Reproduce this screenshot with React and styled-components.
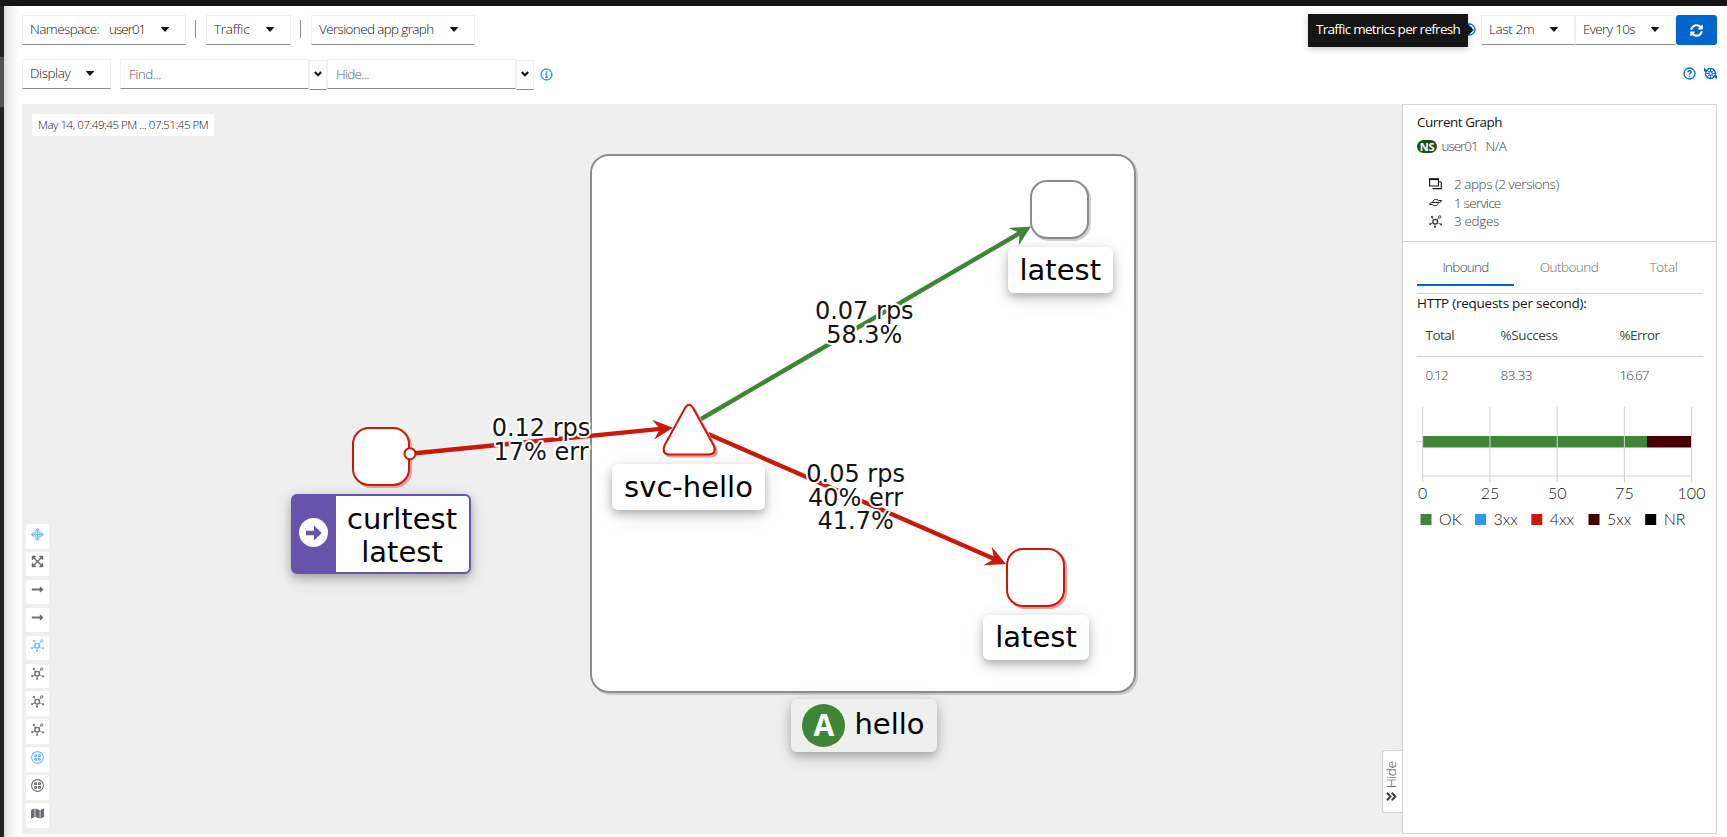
import React from 'react';
import styled, { createGlobalStyle, css } from 'styled-components';
import {
  FaSyncAlt, FaExpandArrowsAlt, FaLongArrowAltRight, FaMap,
} from 'react-icons/fa';

const GREEN = '#3e8635';
const RED = '#c9190b';
const GREY = '#8a8d90';
const BLUE = '#0066cc';

const Global = createGlobalStyle`
  *, *::before, *::after { box-sizing: border-box; }
  html, body { margin: 0; height: 100%; overflow: hidden; }
  body { background: #fff; color: #151515; font: 300 13.5px/20px "Open Sans", sans-serif; }
  svg { display: block; flex: none; }
`;

const T = styled.span`
  letter-spacing: ${p => (p.$ls ?? -0.3) - 0.25}px;
  white-space: nowrap;
`;

/* ---------- shell ---------- */
const Shell = styled.div`
  height: 837px;
  display: grid;
  grid-template: 6px 1fr / 4px 1fr;
`;
const TopBar = styled.div`
  grid-column: 1 / 3;
  background: #151515;
`;
const NavEdge = styled.div`
  background: linear-gradient(#212427 51px, #4f5255 51px, #4f5255 101px, #212427 101px);
`;
const Main = styled.div`
  padding: 9px 10px 3px 18px;
  display: flex;
  flex-direction: column;
  background: linear-gradient(90deg, #dcdcdc 0, #eee 5px, #fafafa 12px, #fff 17px);
  min-width: 0;
`;

/* ---------- toolbar ---------- */
const Row = styled.div`
  display: flex;
  align-items: flex-start;
  height: ${p => p.$h}px;
`;
const fieldBorder = css`
  border: 1px solid #f0f0f0;
  border-bottom-color: #8a8d90;
  background: #fff;
`;
const Select = styled.div`
  ${fieldBorder}
  width: ${p => p.$w}px;
  height: 30px;
  padding: 0 16px 2px 7px;
  display: flex;
  align-items: center;
  justify-content: space-between;
`;
const Divider = styled.div`
  width: 1px;
  height: 18px;
  margin: 5px 10px 0 9px;
  background: #8a8d90;
`;
const Input = styled.div`
  ${fieldBorder}
  width: ${p => p.$w}px;
  height: 30px;
  padding: 4px 8px;
  color: #5c6066;
`;
const Drop = styled.div`
  ${fieldBorder}
  width: 18px;
  height: 30px;
  margin-top: 1px;
  display: flex;
  justify-content: center;
  padding-top: 10px;
`;
const Spacer = styled.div`flex: 1;`;
const RefreshButton = styled.div`
  width: 41px;
  height: 30px;
  border-radius: 3px;
  background: ${BLUE};
  color: #fff;
  display: flex;
  align-items: center;
  justify-content: center;
`;
const HelpSlot = styled.div`
  position: relative;
  width: 13px;
  margin: 8px 5px 0 0;
  color: ${BLUE};
`;
const Tooltip = styled.div`
  position: absolute;
  right: 8px;
  top: -9px;
  width: 160px;
  height: 33px;
  padding: 5px 0 0 8px;
  background: #151515;
  color: #fff;
  font-weight: 400;
  box-shadow: 0 2px 6px rgba(3, 3, 3, .22);
  &::after {
    content: '';
    position: absolute;
    right: -4px;
    top: 12px;
    width: 8px;
    height: 8px;
    background: #151515;
    transform: rotate(45deg);
  }
`;
const Pad = styled.div`
  padding: ${p => p.$p};
  color: ${p => p.$c || 'inherit'};
`;

/* ---------- body ---------- */
const Body = styled.div`
  display: flex;
  height: 730px;
`;
const Graph = styled.div`
  position: relative;
  width: 1380px;
  background: #efefef;
  padding: 10px;
`;
const Stamp = styled.div`
  width: 182px;
  height: 22px;
  border-radius: 2px;
  background: #fff;
  padding-left: 6px;
  font-size: 11.5px;
  line-height: 22px;
`;
const Tools = styled.div`
  position: absolute;
  left: 4px;
  bottom: 6.5px;
  display: flex;
  flex-direction: column;
  gap: 3.4px;
`;
const Tool = styled.div`
  width: 23px;
  height: 24.5px;
  border-radius: 2px;
  background: #fff;
  color: ${p => (p.$on ? '#73bcf7' : '#6a6e73')};
  display: flex;
  justify-content: center;
  padding-top: 3.5px;
`;
const HideTab = styled.div`
  position: absolute;
  right: 0;
  bottom: 21px;
  width: 20px;
  height: 63px;
  border: 1px solid #d2d2d2;
  border-right: 0;
  border-radius: 3px 0 0 3px;
  background: #fff;
  display: flex;
  flex-direction: column;
  align-items: center;
  padding: 10px 3px 0 0;
  gap: 4px;
  color: #3c3f42;
`;
const Vertical = styled.span`
  writing-mode: vertical-rl;
  transform: rotate(180deg);
  line-height: 16px;
  height: 27px;
`;

/* ---------- graph items, placed on the free canvas ---------- */
const At = styled.div`
  position: absolute;
  left: ${p => p.$x - 22}px;
  top: ${p => p.$y - 104}px;
  width: ${p => p.$w}px;
  height: ${p => p.$h}px;
`;
const GroupBox = styled(At)`
  background: #fff;
  border: 2px solid ${GREY};
  border-radius: 19px;
  box-shadow: 2px 2px 0 #c9cacc;
`;
const NodeBox = styled(At)`
  background: #fff;
  border: 2px solid ${p => (p.$err ? RED : GREY)};
  border-radius: 17px;
  box-shadow: 2px 2px 0 ${p => (p.$err ? '#e8a09a' : '#d0d1d3')};
`;
const NodeLabel = styled(At)`
  display: flex;
  align-items: center;
  justify-content: center;
  gap: ${p => p.$gap || 0}px;
  border-radius: 6px;
  background: ${p => p.$bg || '#fff'};
  box-shadow: 0 4px 9px rgba(0, 0, 0, .24), 0 5px 20px rgba(0, 0, 0, .12);
  color: #000;
  font: 400 29px/33px "DejaVu Sans", sans-serif;
  white-space: nowrap;
`;
const RootLabel = styled(NodeLabel)`
  border: 2px solid #6753ac;
  background: #fff;
  align-items: stretch;
  justify-content: flex-start;
`;
const RootSide = styled.div`
  width: 43px;
  background: #6753ac;
  display: flex;
  align-items: center;
  justify-content: center;
`;
const RootDot = styled.div`
  width: 29px;
  height: 29px;
  margin: -3px 2px 0 0;
  border-radius: 50%;
  background: #fff;
  color: #6753ac;
  display: flex;
  align-items: center;
  justify-content: center;
`;
const RootText = styled.div`
  flex: 1;
  text-align: center;
  padding: 7px 1px 0 0;
`;
const AppBadge = styled.div`
  width: 43px;
  height: 43px;
  border-radius: 50%;
  background: ${GREEN};
  color: #fff;
  text-align: center;
  font: 700 30px/41px "Open Sans", sans-serif;
`;
const EdgeLayer = styled.svg`
  position: absolute;
  left: 0;
  top: 0;
`;
const EdgeText = styled.text`
  font: 400 24px "DejaVu Sans", sans-serif;
  fill: #151515;
  stroke: #fff;
  stroke-width: 4px;
  stroke-linejoin: round;
  paint-order: stroke;
  text-anchor: middle;
`;

/* ---------- side panel ---------- */
const Panel = styled.div`
  width: 315px;
  border: 1px solid #d2d2d2;
  background: #fff;
  color: #3c3f42;
`;
const Summary = styled.div`
  height: 137px;
  padding: 7px 14px 0;
  border-bottom: 1px solid #d2d2d2;
`;
const Strong = styled.div`
  font-weight: 500;
  color: #151515;
  margin-top: ${p => p.$mt || 0}px;
`;
const NsLine = styled.div`
  display: flex;
  align-items: center;
  height: 20px;
  margin-top: 4px;
`;
const NsBadge = styled.span`
  width: 20px;
  height: 13px;
  margin-right: 4.5px;
  border-radius: 7px;
  background: #1e4f18;
  color: #fff;
  font: 700 11px/13px "Open Sans", sans-serif;
  text-align: center;
  letter-spacing: -.3px;
`;
const Counts = styled.div`padding: 19px 0 0 12px;`;
const Count = styled.div`
  display: flex;
  align-items: center;
  gap: 12px;
  height: 18.6px;
`;
const Details = styled.div`padding: 0 13px 0 14px;`;
const Tabs = styled.div`
  display: flex;
  height: 52px;
  border-bottom: 1px solid #d2d2d2;
`;
const Tab = styled.div`
  width: ${p => p.$w}px;
  height: 43.5px;
  padding-top: 15px;
  text-align: center;
  color: ${p => (p.$on ? '#3c3f42' : '#6a6e73')};
  border-bottom: ${p => (p.$on ? `2px solid ${BLUE}` : '0')};
`;
const Cells = styled.div`
  display: grid;
  grid-template-columns: 75px 119px 1fr;
  padding: 0 0 ${p => (p.$head ? 0 : 3)}px 8.5px;
  height: ${p => p.$h}px;
  align-items: center;
  font-weight: ${p => (p.$head ? 400 : 300)};
  border-bottom: ${p => (p.$head ? '1px solid #d2d2d2' : '0')};
`;
const ChartText = styled.text`
  font: 300 16px Lato, sans-serif;
  fill: #151515;
  text-anchor: ${p => p.$a || 'start'};
`;

/* ---------- icons ---------- */
const Caret = () => (
  <svg width="8" height="5" viewBox="0 0 8 5" fill="#151515">
    <path d="M.3 0h7.400q.5 .3 .1 .8L4.500 4.500q-.5 .5-1 0L.2 .8Q-.2 .3 .3 0z" />
  </svg>
);
const DropChevron = () => (
  <svg width="8" height="6" viewBox="0 0 8 6" fill="none" stroke="#151515" strokeWidth="2.1">
    <path d="M.8 1 4 4.300 7.200 1" />
  </svg>
);
const InfoIcon = ({ glyph, size = 13 }) => (
  <svg width={size} height={size} viewBox="0 0 13 13" fill="none" stroke="currentColor">
    <circle cx="6.5" cy="6.5" r="5.5" strokeWidth="1.3" />
    {glyph === 'i'
      ? <path d="M6.5 3.2v1.5M5.4 6h1.2v3.3M5.2 9.3h2.7" strokeWidth="1.4" />
      : <path d="M4.8 5.2c0-2 3.4-2 3.4 0 0 1.1-1.7 1.1-1.7 2.2M6.5 8.4v1.5" strokeWidth="1.4" />}
  </svg>
);
const TourIcon = () => (
  <svg width="13" height="13" viewBox="0 0 13 13" fill="none" stroke="currentColor">
    <circle cx="6.5" cy="6.5" r="5" strokeWidth="1.3" />
    <circle cx="6.5" cy="6.5" r="1.8" strokeWidth="1.2" />
    <path d="M6.5 1.5v2.6M6.5 9v2.6M1.5 6.5h2.6M9 6.5h2.6M3 3l1.8 1.8M10 3 8.2 4.8M3 10l1.8-1.8M10 10 8.2 8.2" strokeWidth=".9" />
    <path d="M0 .5v4h3.800zM13 12.5V8.500H9.200z" fill="currentColor" stroke="none" />
  </svg>
);
const DragIcon = () => (
  <svg width="13" height="13" viewBox="0 0 13 13" fill="currentColor">
    <path d="M6.5 0 9.200 2.8H3.800zM6.5 13 3.800 10.200h5.400zM0 6.5 2.800 3.800v5.400zM13 6.5 10.200 9.200V3.800z" />
    <path d="M4 4h5v5H4zM6.5 3v7M3 6.5h7" fill="none" stroke="currentColor" strokeWidth="1.1" />
  </svg>
);
const TopologyIcon = () => (
  <svg width="13" height="13" viewBox="0 0 13 13" fill="none" stroke="currentColor">
    <circle cx="6.2" cy="6.7" r="2.3" strokeWidth="1.4" />
    <circle cx="10.7" cy="1.9" r="1.2" strokeWidth="1" />
    <path d="M7.8 5 9.8 2.9M4.6 5 3.3 2.4M4 7.6 1.8 8.8M6 9.2v1.8M8.4 7.7l2.5 1.2" strokeWidth=".8" />
    <g fill="currentColor" stroke="none">
      <circle cx="3" cy="1.9" r="1.1" />
      <circle cx="1.2" cy="9.1" r="1.1" />
      <circle cx="6" cy="11.8" r="1.1" />
      <circle cx="12" cy="9.3" r="1.1" />
    </g>
  </svg>
);
const NamespaceIcon = () => (
  <svg width="13" height="13" viewBox="0 0 13 13" fill="none" stroke="currentColor">
    <circle cx="6.5" cy="6.5" r="5.9" strokeWidth="1.1" />
    <path d="M3.7 3.9h1.8v1.6H3.7zM7.6 3.9h1.8v1.6H7.6zM3.7 7.6h1.8v1.6H3.7zM7.6 7.6h1.8v1.6H7.6z" strokeWidth="1.1" />
  </svg>
);
const AppsIcon = () => (
  <svg width="13" height="12" viewBox="0 0 13 12" fill="none" stroke="#151515">
    <path d="M.6 1h8.8v7H.6z" strokeWidth="1.1" />
    <path d="M0 1.2h10" strokeWidth="1.8" />
    <path d="M12.3 4v6.6H3.600M9.8 4h2.5" strokeWidth="1.1" />
  </svg>
);
const ServiceIcon = () => (
  <svg width="13" height="9" viewBox="0 0 13 9" fill="none" stroke="#151515" strokeWidth="1">
    <path d="M3.700 4.500C4.200 1.300 7.600 .3 9.400 2.500H12.600" />
    <path d="M9.500 4.500C8.800 7.700 5.400 8.700 3.600 6.500H.4" />
    <path d="M.5 6.300C1 4.600 2 4.500 6.500 4.500S12 4.400 12.500 2.700" />
  </svg>
);

/* ---------- graph data ---------- */
const EDGES = [
  { c: RED, from: [410, 453.7], to: [673, 427.7], x: 541, y: 436, lines: ['0.12 rps', '17% err'] },
  { c: GREEN, from: [701, 419], to: [1031, 226.5], x: 864.3, y: 319, lines: ['0.07 rps', '58.3%'] },
  { c: RED, from: [708, 434], to: [1006, 564], x: 855.6, y: 482.3, lines: ['0.05 rps', '40% err', '41.7%'] },
];
const Edge = ({ e }) => {
  const dx = e.to[0] - e.from[0];
  const dy = e.to[1] - e.from[1];
  const len = Math.hypot(dx, dy);
  const angle = (Math.atan2(dy, dx) * 180) / Math.PI;
  return (
    <g transform={`translate(${e.from[0]} ${e.from[1]}) rotate(${angle})`} fill={e.c}>
      <rect x="0" y="-2.2" width={len - 10} height="4.4" />
      <path d={`M${len} 0 L${len - 20} -10 L${len - 13} 0 L${len - 20} 10 Z`} />
    </g>
  );
};
const TRIANGLE = 'M684.800 408.500Q689 401 693.300 408.500L713.700 445.500Q717 454.500 708.500 454.500H669.500Q661.500 454.500 664.500 445.500Z';

const GRID = [[1422.7, '0'], [1490, '25'], [1557.2, '50'], [1624.4, '75'], [1691.5, '100']];
const LEGEND = [[1420.5, GREEN, 'OK'], [1475, '#2b9af3', '3xx'], [1531.3, RED, '4xx'], [1588.5, '#470000', '5xx'], [1645.2, '#030303', 'NR']];

const TOOLS = [
  [DragIcon, 1], [() => <FaExpandArrowsAlt size={13} />], [() => <FaLongArrowAltRight size={13} />],
  [() => <FaLongArrowAltRight size={13} />], [TopologyIcon, 1], [TopologyIcon], [TopologyIcon], [TopologyIcon],
  [NamespaceIcon, 1], [NamespaceIcon], [() => <FaMap size={13} />],
];

export default function App() {
  return (
    <Shell>
      <Global />
      <TopBar />
      <NavEdge />
      <Main>
        <Row $h={44}>
          <Select $w={164}>
            <T>Namespace:</T>
            <Pad $p="0 6px 0 0"><T $ls={-0.75}>user01</T></Pad>
            <Caret />
          </Select>
          <Divider />
          <Select $w={85}><T $ls={0}>Traffic</T><Caret /></Select>
          <Divider />
          <Select $w={164}><T $ls={-0.4}>Versioned app graph</T><Caret /></Select>
          <Spacer />
          <HelpSlot>
            <InfoIcon glyph="?" />
            <Tooltip><T $ls={-0.47}>Traffic metrics per refresh</T></Tooltip>
          </HelpSlot>
          <Select $w={94}><T $ls={-0.15}>Last 2m</T><Caret /></Select>
          <Select $w={101}><T $ls={-0.4}>Every 10s</T><Caret /></Select>
          <RefreshButton><FaSyncAlt size={13} /></RefreshButton>
        </Row>
        <Row $h={45}>
          <Select $w={89}><T $ls={-0.2}>Display</T><Caret /></Select>
          <Pad $p="0 0 0 9px"><Input $w={189}><T $ls={-0.27}>Find...</T></Input></Pad>
          <Drop><DropChevron /></Drop>
          <Input $w={189}><T $ls={-0.5}>Hide...</T></Input>
          <Drop><DropChevron /></Drop>
          <Pad $p="9px 0 0 5.5px" $c="#2b9af3"><InfoIcon glyph="i" /></Pad>
          <Spacer />
          <Pad $p="8px 8px 0 0" $c={BLUE}><InfoIcon glyph="?" /></Pad>
          <Pad $p="8px 0 0" $c={BLUE}><TourIcon /></Pad>
        </Row>
        <Body>
          <Graph>
            <Stamp><T $ls={-0.2}>May 14, 07:49:45 PM ... 07:51:45 PM</T></Stamp>

            <GroupBox $x={590} $y={154} $w={546} $h={539} />
            <NodeBox $x={1030} $y={180} $w={59} $h={59} />
            <NodeBox $x={1006} $y={548} $w={59} $h={59} $err />
            <NodeBox $x={352} $y={427} $w={58} $h={59} $err />
            <EdgeLayer width="1380" height="730" viewBox="22 104 1380 730">
              {EDGES.map(e => <Edge key={e.x} e={e} />)}
              <g strokeWidth="2" strokeLinejoin="round">
                <path d={TRIANGLE} transform="translate(2 2)" fill="#e8a09a" stroke="#e8a09a" />
                <path d={TRIANGLE} fill="#fff" stroke={RED} />
                <circle cx="410" cy="453.7" r="5.5" fill="#fff" stroke={RED} />
              </g>
              {EDGES.map(e => e.lines.map((l, i) => (
                <EdgeText key={l} x={e.x} y={e.y + i * 23.5}>{l}</EdgeText>
              )))}
            </EdgeLayer>
            <NodeLabel $x={1007.5} $y={247} $w={105.5} $h={46}>latest</NodeLabel>
            <NodeLabel $x={983} $y={615} $w={106} $h={45}>latest</NodeLabel>
            <NodeLabel $x={612} $y={464} $w={153} $h={46}>svc-hello</NodeLabel>
            <RootLabel $x={291} $y={494} $w={180} $h={80}>
              <RootSide>
                <RootDot>
                  <svg width="16" height="16" viewBox="0 0 16 16" fill="currentColor">
                    <path d="M0 5.800h8V.5L15.800 8 8 15.500V10.200H0z" />
                  </svg>
                </RootDot>
              </RootSide>
              <RootText>curltest<br />latest</RootText>
            </RootLabel>
            <NodeLabel $x={790.5} $y={699} $w={146} $h={53} $bg="#efefef" $gap={9}>
              <AppBadge>A</AppBadge>
              <Pad $p="0 0 2px">hello</Pad>
            </NodeLabel>

            <Tools>
              {TOOLS.map(([Icon, on], i) => <Tool key={i} $on={on}><Icon /></Tool>)}
            </Tools>
            <HideTab>
              <Vertical><T $ls={-0.2}>Hide</T></Vertical>
              <svg width="11" height="9" viewBox="0 0 11 9" fill="none" stroke="currentColor" strokeWidth="2">
                <path d="M1 .8 4.500 4.500 1 8.200M5.800 .8 9.300 4.500 5.800 8.200" />
              </svg>
            </HideTab>
          </Graph>
          <Panel>
            <Summary>
              <Strong><T $ls={-0.23}>Current Graph</T></Strong>
              <NsLine>
                <NsBadge>NS</NsBadge>
                <T $ls={-0.8}>user01</T>
                <Pad $p="0 0 0 8px"><T>N/A</T></Pad>
              </NsLine>
              <Counts>
                <Count><AppsIcon /><T $ls={-0.2}>2 apps (2 versions)</T></Count>
                <Count><ServiceIcon /><T $ls={-0.5}>1 service</T></Count>
                <Count><TopologyIcon /><T $ls={-0.1}>3 edges</T></Count>
              </Counts>
            </Summary>
            <Details>
              <Tabs>
                <Tab $w={97} $on><T $ls={-0.5}>Inbound</T></Tab>
                <Tab $w={110}><T $ls={-0.3}>Outbound</T></Tab>
                <Tab $w={79}><T $ls={-0.1}>Total</T></Tab>
              </Tabs>
              <Strong $mt={-1}><T $ls={0}>HTTP (requests per second):</T></Strong>
              <Cells $head $h={44}>
                <T>Total</T><T $ls={-0.15}>%Success</T><T>%Error</T>
              </Cells>
              <Cells $h={38}>
                <T $ls={-0.8}>0.12</T><T $ls={-0.25}>83.33</T><T $ls={-0.8}>16.67</T>
              </Cells>
              <svg width="294" height="140" viewBox="1417 395 294 140" overflow="visible">
                <path d="M1422.7 436h224.3v11.5h-224.3z" fill={GREEN} />
                <path d="M1647 436h44.5v11.5h-44.5z" fill="#470000" />
                <g stroke="#d2d2d2">
                  <path d="M1416 441.5h6.5M1422.5 476H1691.5" />
                  {GRID.map(([x]) => <path key={x} d={`M${x} 407V482`} />)}
                </g>
                {GRID.map(([x, l]) => <ChartText key={l} $a="middle" x={x} y="499">{l}</ChartText>)}
                {LEGEND.map(([x, c, l]) => (
                  <g key={l}>
                    <rect x={x} y="514" width="11" height="11" fill={c} />
                    <ChartText x={x + 18.5} y="525">{l}</ChartText>
                  </g>
                ))}
              </svg>
            </Details>
          </Panel>
        </Body>
      </Main>
    </Shell>
  );
}
